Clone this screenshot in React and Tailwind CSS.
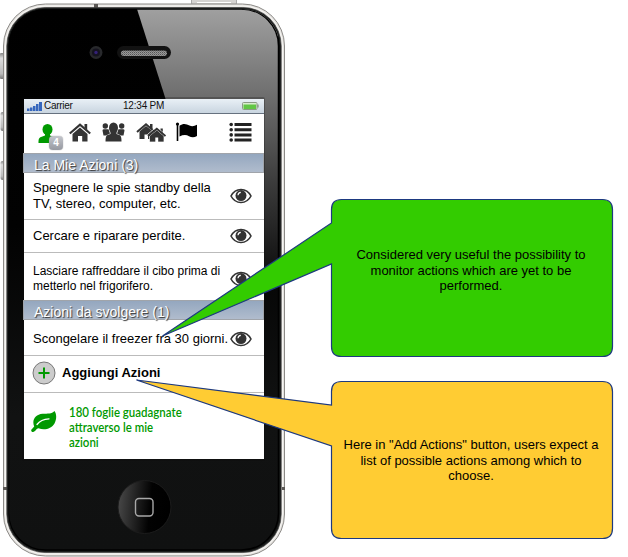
import React from "react";

function PhoneShell() {
  return (
    <svg className="absolute inset-0" width="286" height="557" viewBox="0 0 286 557" fill="none">
      <defs>
        <linearGradient id="gloss" x1="0" y1="9" x2="0" y2="275" gradientUnits="userSpaceOnUse">
          <stop offset="0" stopColor="#a0a0a0" />
          <stop offset="0.34" stopColor="#6c6c6c" />
          <stop offset="0.65" stopColor="#3c3c3c" />
          <stop offset="1" stopColor="#0e0e0e" />
        </linearGradient>
        <linearGradient id="face" x1="0" y1="0" x2="0" y2="1">
          <stop offset="0" stopColor="#000" />
          <stop offset="0.4" stopColor="#020202" />
          <stop offset="0.75" stopColor="#111212" />
          <stop offset="1" stopColor="#101111" />
        </linearGradient>
        <linearGradient id="button" x1="0" y1="0" x2="1" y2="0.1">
          <stop offset="0" stopColor="#4c4c4c" />
          <stop offset="0.35" stopColor="#242424" />
          <stop offset="0.65" stopColor="#020202" />
          <stop offset="1" stopColor="#000" />
        </linearGradient>
        <linearGradient id="key" x1="0" y1="0" x2="0" y2="1">
          <stop offset="0" stopColor="#888" />
          <stop offset="0.2" stopColor="#ddd" />
          <stop offset="0.8" stopColor="#bbb" />
          <stop offset="1" stopColor="#777" />
        </linearGradient>
        <pattern id="mesh" width="2" height="2" patternUnits="userSpaceOnUse">
          <rect width="2" height="2" fill="#999" />
          <rect width="1" height="1" fill="#555" />
          <rect x="1" y="1" width="1" height="1" fill="#777" />
        </pattern>
        <clipPath id="faceClip">
          <rect x="8.5" y="9" width="271" height="542" rx="37" />
        </clipPath>
      </defs>
      <rect x="191.500" y="-2" width="45" height="7" rx="2" fill="#d5d3d1" stroke="#aaa" />
      <path d="M197 2.500H231" stroke="#fff" />
      <rect x="0" y="53" width="4" height="26" rx="1" fill="url(#key)" />
      <rect x="0.500" y="112" width="4" height="19" rx="2" fill="url(#key)" />
      <rect x="0.500" y="161" width="4" height="19" rx="2" fill="url(#key)" />
      <rect x="3.500" y="4" width="281" height="552" rx="42" fill="#e6e4e1" stroke="#8c8a87" />
      <rect x="5.500" y="6" width="277" height="548" rx="40" stroke="#f7f6f3" />
      <path d="M94 4h4v4h-4zM3 487h4v3H3zM282 487h3v3h-3z" fill="#5b5855" />
      <rect x="6.800" y="7.500" width="274.400" height="545" rx="38.500" fill="#1a1c1b" stroke="#444" strokeWidth="0.700" />
      <rect x="8.500" y="9" width="271" height="542" rx="37" fill="url(#face)" />
      <g clipPath="url(#faceClip)">
        <path d="M137 9H278V275H221.500Z" fill="url(#gloss)" />
        <rect x="8.500" y="9" width="270" height="541" rx="37" stroke="#000" strokeWidth="1.500" />
      </g>
      <circle cx="96" cy="52.500" r="6.500" fill="#28292c" />
      <circle cx="96" cy="52.500" r="4" fill="#15131f" />
      <circle cx="96" cy="52.500" r="1.700" fill="#342178" />
      <rect x="117" y="46" width="54" height="13" rx="6.500" fill="#121212" />
      <rect x="121" y="50.500" width="46" height="5.500" rx="2.700" fill="url(#mesh)" />
      <rect x="22" y="97" width="243" height="364" rx="2" fill="#0d0d0d" fillOpacity="0.25" />
      <circle cx="144.500" cy="507" r="26.500" fill="url(#button)" stroke="#1c1c1c" />
      <rect x="135.500" y="498.500" width="17.500" height="17.500" rx="3.500" stroke="#a8a8a8" strokeWidth="1.400" />
    </svg>
  );
}

function Eye() {
  return (
    <svg className="block shrink-0" width="22" height="16" viewBox="0 0 22 16" fill="none">
      <path d="M1 8C5.500 -0.700 16.500 -0.700 21 8C16.500 16.700 5.500 16.700 1 8Z" fill="#fff" stroke="#333" strokeWidth="1.600" />
      <circle cx="11" cy="7.600" r="5.500" fill="#333" />
      <path d="M8 7.300A3 3 0 0 1 10.800 4.400" stroke="#fff" strokeWidth="1.100" />
    </svg>
  );
}

function NavBar() {
  return (
    <div className="flex h-[39px] items-start pl-[14px] pt-[8px]">
      <div className="relative mt-[2px] h-[20px] w-[20px]">
        <svg className="block" width="20" height="20" viewBox="0 0 20 20" fill="#009900">
          <ellipse cx="9.500" cy="5.500" rx="5" ry="5.500" />
          <path d="M7 9H12V11.500L16.500 13C18.500 13.800 19 15 19 19H0.500C0.500 15 1 13.800 3 13L7 11.500Z" />
        </svg>
        <span className="absolute left-[11px] top-[12px] flex h-[14px] w-[14px] items-center justify-center rounded-[4px] bg-gradient-to-b from-[#c4c6cc] to-[#9699a1] text-[10px] font-bold leading-none text-white shadow-[0_0_1px_#777]">
          4
        </span>
      </div>
      <svg className="ml-[11px] block" width="22" height="20" viewBox="0 0 22 20" fill="none">
        <path d="M3.500 12L11 5.500L18.500 12V19.500H13.200V14H9V19.500H3.500Z" fill="#333" />
        <path d="M0.800 11.500L11 2.600L21.200 11.500" stroke="#333" strokeWidth="2.200" />
        <path d="M15.500 2H18.200V8L15.500 5.500Z" fill="#333" />
      </svg>
      <svg className="ml-[11px] block" width="23" height="20" viewBox="0 0 23 20" fill="#333">
        <circle cx="3.300" cy="4" r="2.700" />
        <circle cx="19.700" cy="4" r="2.700" />
        <path d="M0.500 8.500Q0.500 7.300 2 7.300H6.500L8 11.500L4 13.500H1.500ZM22.500 8.500Q22.500 7.300 21 7.300H16.500L15 11.500L19 13.500H21.500Z" />
        <ellipse cx="11.500" cy="6" rx="4.500" ry="5.500" />
        <path d="M8.500 10H14.500V12L18 13.300Q19.500 14 19.500 19.500H3.500Q3.500 14 5 13.300L8.500 12Z" />
      </svg>
      <svg className="ml-[11px] block" width="30" height="20" viewBox="0 0 30 20" fill="none">
        <path d="M3.500 9.500L10 4L17 9.500V17H12V12.500H8.500V17H3.500Z" fill="#333" />
        <path d="M1 10L10 2.300L19 10" stroke="#333" strokeWidth="2" />
        <path d="M14 2H16.500V7H14ZM24.500 6.500H26.800V11.500H24.500Z" fill="#333" />
        <path d="M13.500 14L20.800 8L28 14V20H13.500Z" fill="#333" stroke="#fff" strokeWidth="0.700" />
        <path d="M11.500 12.500L20.500 5L29.500 12.500" stroke="#fff" strokeWidth="0.800" />
        <path d="M12 14L20.800 6.700L29.500 14" stroke="#333" strokeWidth="1.900" />
        <path d="M19.300 15.500H22.200V20H19.300Z" fill="#fff" />
      </svg>
      <svg className="ml-[9px] block" width="24" height="20" viewBox="0 0 24 20" fill="#000">
        <circle cx="2.500" cy="2" r="1.600" />
        <path d="M1.700 2H3.300V19H1.700ZM4.500 3.700C8.500 0.800 11.500 2 14.500 3.600Q18 5 22 2.800V14Q18 16.500 14 14.200Q10 11.800 4.500 14.500Z" />
      </svg>
      <svg className="ml-[30px] block" width="23" height="20" viewBox="0 0 23 20" fill="#222">
        <circle cx="2.200" cy="2.500" r="1.800" />
        <circle cx="2.200" cy="7.700" r="1.800" />
        <circle cx="2.200" cy="12.900" r="1.800" />
        <circle cx="2.200" cy="18" r="1.800" />
        <path d="M5.500 1H22.500V4H5.500ZM5.500 6.200H22.500V9.200H5.500ZM5.500 11.400H22.500V14.400H5.500ZM5.500 16.500H22.500V19.500H5.500Z" />
      </svg>
    </div>
  );
}

function StatusBar() {
  return (
    <div className="flex h-[15px] items-center border-b border-[#66717f] bg-gradient-to-b from-[#e9f0f6] to-[#c9d5e0] text-[10px] leading-none text-[#111]">
      <svg className="ml-[3px] block" width="15" height="9" viewBox="0 0 15 9" fill="#3566bd">
        <path d="M0 6.500H2.500V9H0ZM3 5.500H5.500V9H3ZM6 4H8.500V9H6ZM9 2H11.500V9H9ZM12 0H15V9H12Z" />
      </svg>
      <span className="ml-[2px] w-[79px] tracking-[-0.030em]">Carrier</span>
      <span className="whitespace-nowrap tracking-[-0.020em]">12:34 PM</span>
      <svg className="ml-auto mr-[5px] block" width="17" height="8" viewBox="0 0 17 8">
        <rect x="0.500" y="0.500" width="14.500" height="7" rx="1" fill="#d9edcf" stroke="#8c9a86" />
        <rect x="1.500" y="2.500" width="12.500" height="4.500" fill="#62c646" />
        <rect x="15.500" y="2.500" width="1" height="3" fill="#718069" />
      </svg>
    </div>
  );
}

function SectionHeader({ children }) {
  return (
    <div className="-ml-px flex h-[20px] items-center whitespace-nowrap border border-[#a0a4aa] bg-gradient-to-b from-[#94a7bf] to-[#b0bccd] pl-[10px] pt-[3px] text-[14px] leading-none text-white [text-shadow:1px_1px_1px_#333]">
      {children}
    </div>
  );
}

function Row({ className, children }) {
  return (
    <div className={`flex items-center justify-between whitespace-nowrap border-[#bbb] pl-[9px] pr-[12px] ${className}`}>
      <p>{children}</p>
      <Eye />
    </div>
  );
}

function Callout({ fill, path, className, children }) {
  return (
    <div className={`relative flex h-[158px] w-[282px] justify-center whitespace-nowrap text-center text-[13px] leading-[15.500px] ${className}`}>
      <svg className="absolute bottom-0 right-0" width="482" height="158" viewBox="0 0 482 158" overflow="visible">
        <path d={path} fill={fill} stroke="#1d3980" strokeWidth="1.200" />
      </svg>
      <p className="relative">{children}</p>
    </div>
  );
}

export default function App() {
  return (
    <div className="flex h-[557px] w-[628px] overflow-hidden bg-white font-['Liberation_Sans',Arial,sans-serif] text-black">
      <div className="relative w-[286px] shrink-0 pl-[24px] pt-[99px]">
        <PhoneShell />
        <div className="relative flex h-[360px] w-[240px] flex-col bg-white">
          <StatusBar />
          <NavBar />
          <SectionHeader>La Mie Azioni (3)</SectionHeader>
          <Row className="h-[47px] border-b text-[13px] leading-[16px]">
            Spegnere le spie standby della
            <br />
            TV, stereo, computer, etc.
          </Row>
          <Row className="h-[33px] border-b text-[13px]">Cercare e riparare perdite.</Row>
          <Row className="h-[47px] pt-[5px] text-[12px] leading-[15.500px]">
            Lasciare raffreddare il cibo prima di
            <br />
            metterlo nel frigorifero.
          </Row>
          <SectionHeader>Azioni da svolgere (1)</SectionHeader>
          <Row className="h-[36px] border-b pt-[2px] text-[13px]">Scongelare il freezer fra 30 giorni.</Row>
          <div className="flex h-[37px] items-center gap-[6px] border-b border-[#bbb] pb-[2px] pl-[8px] text-[13px] font-bold">
            <svg width="24" height="24" viewBox="0 0 24 24" className="block shrink-0">
              <circle cx="12" cy="12" r="11" fill="#ccc" stroke="#777" />
              <path d="M12 6.500V17.500M6.500 12H17.500" stroke="#009900" strokeWidth="2" />
            </svg>
            <span className="whitespace-nowrap">Aggiungi Azioni</span>
          </div>
          <div className="flex pl-[7px] pt-[11px] text-[#009900]">
            <svg className="mt-[6px] block" width="26" height="23" viewBox="0 0 26 23" fill="#009900">
              <path d="M23.500 1C25.500 3.500 26 9 23.500 13.500C20.500 19 13 20.500 7.500 18.200C5.500 18.200 4.500 21.500 2 22C0 22 -0.500 20 1.200 18.800L3.200 16.500C0.500 10 4.500 4.500 11.500 3.800C17 3.500 20.500 4 23.500 1Z" />
              <path d="M6 14.500C8.500 11 12.500 9 18 8.800" fill="none" stroke="#fff" strokeWidth="1.300" strokeLinecap="round" />
            </svg>
            <div className="ml-[12px] flex origin-left scale-x-[0.820] flex-col whitespace-nowrap font-['Lato',sans-serif] text-[14px] font-semibold leading-[15px]">
              <p>180 foglie guadagnate</p>
              <p>attraverso le mie</p>
              <p>azioni</p>
            </div>
          </div>
        </div>
      </div>
      <div className="ml-[45px] flex flex-col gap-[24px] pt-[199px]">
        <Callout
          fill="#33cc00"
          className="pr-[2px] pt-[48px]"
          path="M210.500 0.500H471.500Q481.500 0.500 481.500 10.500V147.500Q481.500 157.500 471.500 157.500H210.500Q200.500 157.500 200.500 147.500V65L31.500 137L200.500 24V10.500Q200.500 0.500 210.500 0.500Z"
        >
          Considered very useful the possibility to
          <br />
          monitor actions which are yet to be
          <br />
          performed.
        </Callout>
        <Callout
          fill="#ffcc33"
          className="pr-[2px] pt-[56px]"
          path="M210.500 0.500H471.500Q481.500 0.500 481.500 10.500V147.500Q481.500 157.500 471.500 157.500H210.500Q200.500 157.500 200.500 147.500V65L5.500 -1L200.500 24V10.500Q200.500 0.500 210.500 0.500Z"
        >
          Here in "Add Actions" button, users expect a
          <br />
          list of possible actions among which to
          <br />
          choose.
        </Callout>
      </div>
    </div>
  );
}
